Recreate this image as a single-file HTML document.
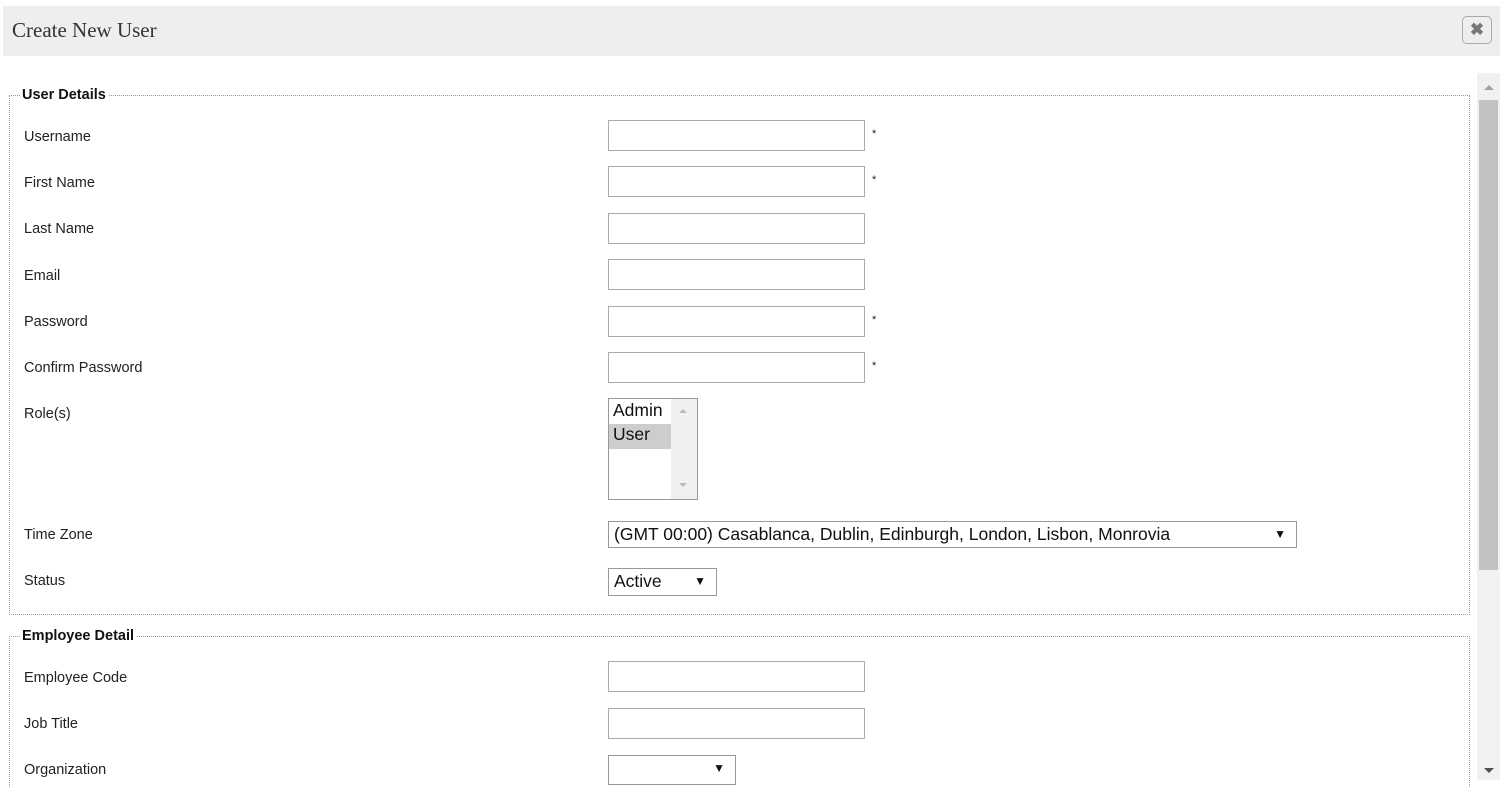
<!DOCTYPE html>
<html><head><style>
html{height:798px;overflow:hidden}
body{margin:0;width:1508px;height:798px;background:#fff;font-family:"Liberation Sans",sans-serif;font-size:14.5px;color:#222;position:relative;overflow:hidden}
.a{position:absolute}
.hdr{left:3px;top:6px;width:1497px;height:50px;background:#eee}
.ttl{left:12px;top:18px;font-family:"Liberation Serif",serif;font-size:21px;color:#333}
.cls{left:1462px;top:16px;width:28px;height:26px;border:1px solid #aaa;border-radius:5px;background:#eee;text-align:center;line-height:26px;font-weight:bold;color:#777;font-size:17px}
.fs{border:1px dotted #999}
.lg{background:#fff;font-weight:bold;padding:0 2px;font-size:14.5px;color:#111}
.lb{left:24px}
.in{left:608px;width:255px;height:29px;border:1px solid #aaa;background:#fff}
.st{left:872px;font-size:11px}
.sel{border:1px solid #999;background:#fff;font-size:17.5px;color:#111;box-sizing:border-box;padding-left:5px;line-height:24px}
.sel span{position:absolute;right:10px;top:0;font-size:12px}
</style></head><body>
<div class="a hdr"></div>
<div class="a ttl">Create New User</div>
<div class="a cls">✖</div>
<div class="a" style="left:1477px;top:73px;width:23px;height:707px;background:#f1f1f1"></div>
<div class="a" style="left:1479px;top:100px;width:19px;height:470px;background:#c1c1c1"></div>
<div class="a" style="left:1484px;top:85px;border:5px solid transparent;border-bottom:5px solid #a3a3a3;border-top:0"></div>
<div class="a" style="left:1484px;top:768px;border:5px solid transparent;border-top:5px solid #505050;border-bottom:0"></div>
<div class="a fs" style="left:9px;top:95px;width:1459px;height:518px"></div>
<div class="a lg" style="left:20px;top:87px">User Details</div>
<div class="a fs" style="left:9px;top:636px;width:1459px;height:150px;border-bottom:none"></div>
<div class="a lg" style="left:20px;top:628px">Employee Detail</div>

<div class="a lb" style="top:129px">Username</div><div class="a in" style="top:120px"></div><div class="a st" style="top:128px">*</div>
<div class="a lb" style="top:175px">First Name</div><div class="a in" style="top:166px"></div><div class="a st" style="top:174px">*</div>
<div class="a lb" style="top:221px">Last Name</div><div class="a in" style="top:213px"></div>
<div class="a lb" style="top:268px">Email</div><div class="a in" style="top:259px"></div>
<div class="a lb" style="top:314px">Password</div><div class="a in" style="top:306px"></div><div class="a st" style="top:314px">*</div>
<div class="a lb" style="top:360px">Confirm Password</div><div class="a in" style="top:352px"></div><div class="a st" style="top:360px">*</div>
<div class="a lb" style="top:406px">Role(s)</div>
<div class="a" style="left:608px;top:398px;width:88px;height:100px;border:1px solid #999;background:#fff">
 <div class="a" style="left:62px;top:0;width:26px;height:100px;background:#f0f0f0"></div>
 <div class="a" style="left:70px;top:10px;border:4px solid transparent;border-bottom:4px solid #bbb;border-top:0"></div>
 <div class="a" style="left:70px;top:84px;border:4px solid transparent;border-top:4px solid #bbb;border-bottom:0"></div>
 <div class="a" style="left:0;top:1px;font-size:17.5px;padding-left:4px;color:#111">Admin</div>
 <div class="a" style="left:0;top:25px;width:62px;height:25px;background:#cdcdcd;font-size:17.5px;padding-left:4px;box-sizing:border-box;color:#111">User</div>
</div>
<div class="a lb" style="top:527px">Time Zone</div>
<div class="a sel" style="left:608px;top:521px;width:689px;height:27px">(GMT 00:00) Casablanca, Dublin, Edinburgh, London, Lisbon, Monrovia<span>▼</span></div>
<div class="a lb" style="top:573px">Status</div>
<div class="a sel" style="left:608px;top:568px;width:109px;height:28px">Active<span>▼</span></div>

<div class="a lb" style="top:670px">Employee Code</div><div class="a in" style="top:661px"></div>
<div class="a lb" style="top:716px">Job Title</div><div class="a in" style="top:708px"></div>
<div class="a lb" style="top:762px">Organization</div>
<div class="a sel" style="left:608px;top:755px;width:128px;height:30px"><span>▼</span></div>
</body></html>
